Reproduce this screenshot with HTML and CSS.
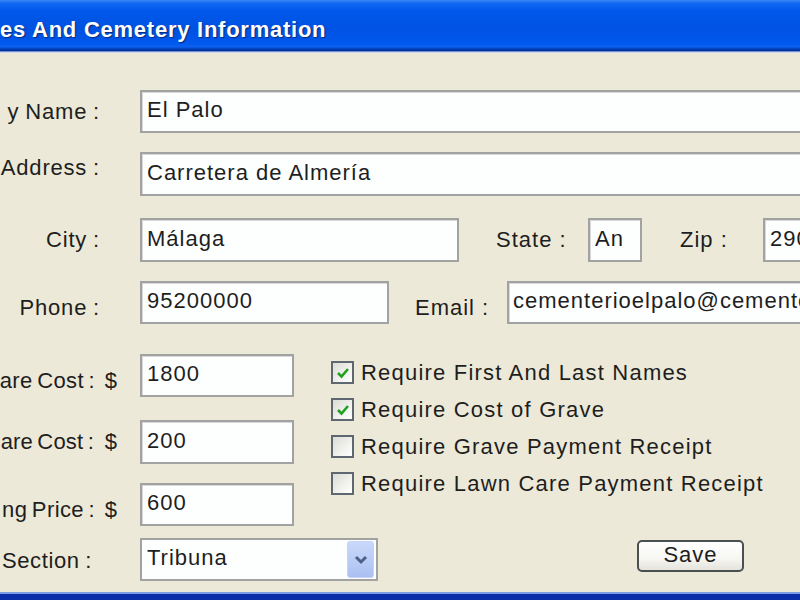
FILE: index.html
```html
<!DOCTYPE html>
<html lang="en">
  <head>
    <meta charset="UTF-8" />
    <meta name="viewport" content="width=device-width, initial-scale=1.0" />
    <title>Cemetery Information</title>
    <link rel="stylesheet" href="styles.css">
  </head>
  <body>
    <div class="window">
      <div class="titlebar">
        <div class="title">es And Cemetery Information</div>
      </div>

      <div class="content">
        <div class="row">
          <div class="lbl">y Name :</div>
          <input class="field wide" type="text" value="El Palo" />
        </div>

        <div class="row row-address">
          <div class="lbl lbl-high">Address :</div>
          <input class="field wide" type="text" value="Carretera de Almería" />
        </div>

        <div class="row row-city">
          <div class="lbl">City :</div>
          <input class="field city" type="text" value="Málaga" />
          <div class="side-lbl state-lbl">State :</div>
          <input class="field state" type="text" value="An" />
          <div class="side-lbl zip-lbl">Zip :</div>
          <input class="field zip" type="text" value="29018" />
        </div>

        <div class="row row-phone">
          <div class="lbl lbl-low">Phone :</div>
          <input class="field phone" type="text" value="95200000" />
          <div class="side-lbl email-lbl lbl-low">Email :</div>
          <input class="field email" type="text" value="cementerioelpalo@cementeriosmalaga.es" />
        </div>

        <div class="lower">
          <div class="money-col">
            <div class="row">
              <div class="lbl money lbl-low">are Cost :</div>
              <div class="dollar lbl-low">$</div>
              <input class="field short" type="text" value="1800" />
            </div>
            <div class="row row-money2">
              <div class="lbl money money2">are Cost :</div>
              <div class="dollar">$</div>
              <input class="field short" type="text" value="200" />
            </div>
            <div class="row row-money3">
              <div class="lbl money lbl-low">ng Price :</div>
              <div class="dollar lbl-low">$</div>
              <input class="field short" type="text" value="600" />
            </div>
          </div>

          <div class="checks">
            <label class="check">
              <span class="box">
                <svg width="14" height="14" viewBox="0 0 14 14"><polyline points="2,7 5.5,10.5 12,3" fill="none" stroke="#21a121" stroke-width="2.6"/></svg>
              </span>
              Require First And Last Names
            </label>
            <label class="check">
              <span class="box">
                <svg width="14" height="14" viewBox="0 0 14 14"><polyline points="2,7 5.5,10.5 12,3" fill="none" stroke="#21a121" stroke-width="2.6"/></svg>
              </span>
              Require Cost of Grave
            </label>
            <label class="check">
              <span class="box"></span>
              Require Grave Payment Receipt
            </label>
            <label class="check">
              <span class="box"></span>
              Require Lawn Care Payment Receipt
            </label>
          </div>
        </div>

        <div class="row row-bottom">
          <div class="lbl section-lbl">Section :</div>
          <div class="combo">
            <span class="combo-text">Tribuna</span>
            <span class="combo-btn">
              <svg width="14" height="10" viewBox="0 0 14 10"><polyline points="2,2 7,7 12,2" fill="none" stroke="#4d6185" stroke-width="3"/></svg>
            </span>
          </div>
          <button class="save-btn" type="button">Save</button>
        </div>
      </div>
    </div>
  </body>
</html>
```

FILE: styles.css
```css
* {
  box-sizing: border-box;
}

html, body {
  margin: 0;
  padding: 0;
  overflow: hidden;
}

body {
  width: 800px;
  height: 600px;
  font-family: 'Liberation Sans', Arial, sans-serif;
  font-size: 22px;
  letter-spacing: 1px;
  color: #1e1e1e;
  background: #ece9d8;
}

.window {
  height: 600px;
  display: flex;
  flex-direction: column;
  background: #ece9d8;
  border-bottom: 6px solid #0a2fa8;
  box-shadow: inset 0 -2px 0 #7d9ee6;
}

.titlebar {
  height: 53px;
  flex-shrink: 0;
  background: linear-gradient(180deg, #3a86f4 0%, #1369f2 6%, #0058ea 20%, #0052e2 55%, #0058ec 82%, #0a62f2 88%, #003cad 93%, #00309a 96%, #c6d2ee 98%, #d8dff0 100%);
  display: flex;
  align-items: center;
}

.title {
  margin-top: 6px;
  white-space: nowrap;
  font-weight: bold;
  font-size: 22px;
  letter-spacing: 0.75px;
  color: #ffffff;
  text-shadow: 1px 1px 1px #0a2a7a;
}

.content {
  flex: 1;
  padding-top: 37px;
}

.row {
  display: flex;
  align-items: center;
  height: 43px;
  white-space: nowrap;
}

.row-address {
  margin-top: 19px;
  height: 44px;
}

.row-city {
  margin-top: 22px;
  height: 44px;
}

.row-phone {
  margin-top: 19px;
}

.lbl {
  width: 100px;
  flex-shrink: 0;
  display: flex;
  justify-content: flex-end;
  margin-right: 40px;
  letter-spacing: 0.8px;
  word-spacing: -1px;
}

.lbl-high {
  margin-bottom: 12px;
}

.lbl-low {
  margin-top: 10px;
}

.side-lbl {
  flex-shrink: 0;
}

.field {
  flex-shrink: 0;
  height: 100%;
  border: 2px solid #a2a2a2;
  box-shadow: inset 1px 1px 0 #d8d8d8;
  background: #fdfefe;
  font-family: 'Liberation Sans', Arial, sans-serif;
  font-size: 22px;
  letter-spacing: 1px;
  color: #1e1e1e;
  padding: 0 0 3px 5px;
  outline: none;
}

.wide {
  width: 700px;
}

.city {
  width: 319px;
}

.state-lbl {
  width: 92px;
  margin-left: 37px;
}

.state {
  width: 54px;
}

.zip-lbl {
  width: 83px;
  margin-left: 38px;
}

.zip {
  width: 120px;
}

.phone {
  width: 249px;
}

.email-lbl {
  width: 92px;
  margin-left: 26px;
}

.email {
  width: 400px;
  padding-left: 4px;
}

.lower {
  display: flex;
  margin-top: 30px;
}

.money-col {
  width: 294px;
  flex-shrink: 0;
}

.money {
  width: 95px;
  margin-right: 0;
  letter-spacing: 0.4px;
  word-spacing: -2px;
}

.money2 {
  width: 94px;
  letter-spacing: 0.2px;
}

.dollar {
  width: 23px;
  flex-shrink: 0;
  text-align: right;
  margin-right: 22px;
}

.money2 + .dollar {
  width: 24px;
}

.short {
  width: 154px;
}

.row-money2 {
  margin-top: 23px;
  height: 44px;
}

.row-money3 {
  margin-top: 19px;
}

.checks {
  margin-left: 37px;
  letter-spacing: 1.2px;
}

.check {
  display: flex;
  align-items: center;
  height: 37px;
  white-space: nowrap;
}

.box {
  width: 23px;
  height: 23px;
  margin-right: 7px;
  border: 2px solid #5f6870;
  background: linear-gradient(135deg, #dcdcd5 0%, #f2f2ee 60%, #ffffff 100%);
  display: flex;
  align-items: center;
  justify-content: center;
}

.row-bottom {
  margin-top: 12px;
  align-items: flex-start;
}

.section-lbl {
  width: 92px;
  margin-right: 48px;
  margin-top: 10px;
  letter-spacing: 0.6px;
}

.combo {
  width: 238px;
  height: 43px;
  flex-shrink: 0;
  border: 2px solid #a2a2a2;
  background: #fdfefe;
  display: flex;
  align-items: center;
  justify-content: space-between;
  padding: 0 2px 0 5px;
}

.combo-text {
  margin-top: -4px;
}

.combo-btn {
  width: 27px;
  height: 37px;
  border-radius: 3px;
  background: linear-gradient(180deg, #c9d8fb 0%, #b7cbf6 60%, #abc0f1 100%);
  border: 1px solid #c3d2f5;
  display: flex;
  align-items: center;
  justify-content: center;
}

.save-btn {
  margin-left: 259px;
  margin-top: 2px;
  width: 107px;
  height: 32px;
  border: 2px solid #4a4f52;
  border-radius: 5px;
  background: linear-gradient(180deg, #ffffff 0%, #f6f6f2 60%, #e4e3dc 100%);
  font-family: 'Liberation Sans', Arial, sans-serif;
  font-size: 22px;
  letter-spacing: 1px;
  color: #1e1e1e;
  padding: 0 0 3px 0;
}
```
